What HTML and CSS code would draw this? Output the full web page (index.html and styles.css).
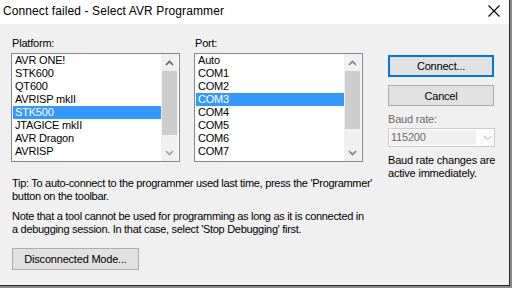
FILE: index.html
```html
<!DOCTYPE html>
<html lang="en">
<head>
    <meta charset="UTF-8">
    <title>Connect failed - Select AVR Programmer</title>
    <link rel="stylesheet" href="styles.css">
</head>
<body>
    <div class="window">
        <div class="titlebar">
            <span class="title">Connect failed - Select AVR Programmer</span>
            <svg class="close" width="12" height="12" viewBox="0 0 12 12">
                <path d="M0.5 0.5 L11.5 11.5 M11.5 0.5 L0.5 11.5" stroke="#000" stroke-width="1.1" fill="none"/>
            </svg>
        </div>

        <div class="content">
            <div class="main">
                <div class="lists">
                    <div class="field">
                        <div class="label">Platform:</div>
                        <div class="listbox">
                            <ul class="items">
                                <li>AVR ONE!</li>
                                <li>STK600</li>
                                <li>QT600</li>
                                <li>AVRISP mkII</li>
                                <li class="selected">STK500</li>
                                <li>JTAGICE mkII</li>
                                <li>AVR Dragon</li>
                                <li>AVRISP</li>
                            </ul>
                            <div class="scrollbar">
                                <div class="arrow">
                                    <svg width="9" height="6" viewBox="0 0 9 6"><path d="M1 5 L4.5 1.5 L8 5" stroke="#606060" stroke-width="1.6" fill="none"/></svg>
                                </div>
                                <div class="track">
                                    <div class="thumb thumb-platform"></div>
                                </div>
                                <div class="arrow">
                                    <svg width="9" height="6" viewBox="0 0 9 6"><path d="M1 1 L4.5 4.5 L8 1" stroke="#a0a0a0" stroke-width="1.6" fill="none"/></svg>
                                </div>
                            </div>
                        </div>
                    </div>

                    <div class="field">
                        <div class="label">Port:</div>
                        <div class="listbox">
                            <ul class="items">
                                <li>Auto</li>
                                <li>COM1</li>
                                <li>COM2</li>
                                <li class="selected">COM3</li>
                                <li>COM4</li>
                                <li>COM5</li>
                                <li>COM6</li>
                                <li>COM7</li>
                            </ul>
                            <div class="scrollbar">
                                <div class="arrow">
                                    <svg width="9" height="6" viewBox="0 0 9 6"><path d="M1 5 L4.5 1.5 L8 5" stroke="#808080" stroke-width="1.6" fill="none"/></svg>
                                </div>
                                <div class="track">
                                    <div class="thumb thumb-port"></div>
                                </div>
                                <div class="arrow">
                                    <svg width="9" height="6" viewBox="0 0 9 6"><path d="M1 1 L4.5 4.5 L8 1" stroke="#808080" stroke-width="1.6" fill="none"/></svg>
                                </div>
                            </div>
                        </div>
                    </div>
                </div>

                <p class="tip">Tip: To auto-connect to the programmer used last time, press the 'Programmer'<br>button on the toolbar.</p>
                <p class="note">Note that a tool cannot be used for programming as long as it is connected in<br>a debugging session. In that case, select 'Stop Debugging' first.</p>

                <button class="btn btn-wide">Disconnected Mode...</button>
            </div>

            <div class="side">
                <button class="btn btn-default">Connect...</button>
                <button class="btn">Cancel</button>
                <div class="label disabled">Baud rate:</div>
                <div class="combo">
                    <span class="combo-value">115200</span>
                    <svg class="combo-arrow" width="9" height="6" viewBox="0 0 9 6"><path d="M1 1 L4.5 4.5 L8 1" stroke="#b4b4b4" stroke-width="1" fill="none"/></svg>
                </div>
                <div class="hint">Baud rate changes are<br>active immediately.</div>
            </div>
        </div>
    </div>
</body>
</html>
```

FILE: styles.css
```css
html, body {
    margin: 0;
    padding: 0;
    background: #8a8a8a;
}
body {
    font-family: "Liberation Sans", Arial, sans-serif;
    font-size: 11px;
    letter-spacing: -0.2px;
    color: #000;
}
.window {
    width: 510px;
    height: 286px;
    background: #f0f0f0;
    border-right: 1px solid #2b2b2b;
    border-bottom: 1px solid #2b2b2b;
    box-sizing: border-box;
    overflow: hidden;
}
.titlebar {
    height: 22px;
    background: #fff;
    display: flex;
    align-items: center;
    justify-content: space-between;
    padding: 0 9px 2px 3px;
}
.title {
    font-size: 12px;
    letter-spacing: 0.1px;
}
.content {
    display: flex;
    padding: 13px 0 0 11px;
}
.main {
    width: 367px;
}
.lists {
    display: flex;
    gap: 14px;
}
.label {
    line-height: 13px;
    height: 13px;
    padding-left: 1px;
    margin-bottom: 3px;
}
.disabled {
    color: #6d6d6d;
}
.listbox {
    width: 169px;
    height: 109px;
    box-sizing: border-box;
    border: 1px solid #828790;
    background: #fff;
    display: flex;
    padding: 0 1px 0 1px;
}
.items {
    list-style: none;
    margin: 0;
    padding: 0;
    flex: 1;
}
.items li {
    height: 13px;
    line-height: 13px;
    padding-left: 2px;
    white-space: nowrap;
}
.items li.selected {
    background: #3399ff;
    color: #fff;
}
.scrollbar {
    width: 17px;
    background: #f0f0f0;
    display: flex;
    flex-direction: column;
}
.arrow {
    height: 17px;
    display: flex;
    align-items: center;
    justify-content: center;
}
.track {
    flex: 1;
    padding: 0 1px;
}
.thumb {
    background: #cdcdcd;
}
.thumb-platform {
    height: 64px;
}
.thumb-port {
    height: 58px;
}
.tip, .note {
    line-height: 13px;
    letter-spacing: -0.3px;
    white-space: nowrap;
}
.tip {
    margin: 15px 0 0 1px;
}
.note {
    margin: 7px 0 0 1px;
}
.btn {
    font-family: "Liberation Sans", Arial, sans-serif;
    font-size: 11px;
    letter-spacing: -0.2px;
    color: #000;
    background: #e1e1e1;
    border: 1px solid #adadad;
    height: 21px;
    padding: 0;
    box-sizing: border-box;
}
.btn-wide {
    width: 127px;
    margin: 12px 0 0 1px;
    height: 22px;
}
.side {
    width: 109px;
    margin-left: 10px;
    padding-top: 18px;
    display: flex;
    flex-direction: column;
}
.side .btn {
    width: 106px;
    margin-bottom: 7px;
}
.side .btn-default {
    border: 2px solid #0078d7;
    height: 22px;
    margin-bottom: 8px;
}
.side .label {
    margin-bottom: 2px;
    padding-left: 0;
}
.combo {
    width: 107px;
    height: 19px;
    box-sizing: border-box;
    border: 1px solid #cccccc;
    background: #fcfcfc;
    padding: 1px;
    display: flex;
    align-items: center;
}
.combo-value {
    width: 85px;
    height: 15px;
    line-height: 15px;
    background: #f0f0f0;
    color: #6d6d6d;
    padding-left: 1px;
}
.combo-arrow {
    margin-left: 7px;
}
.hint {
    margin-top: 7px;
    line-height: 13px;
    white-space: nowrap;
}
```
